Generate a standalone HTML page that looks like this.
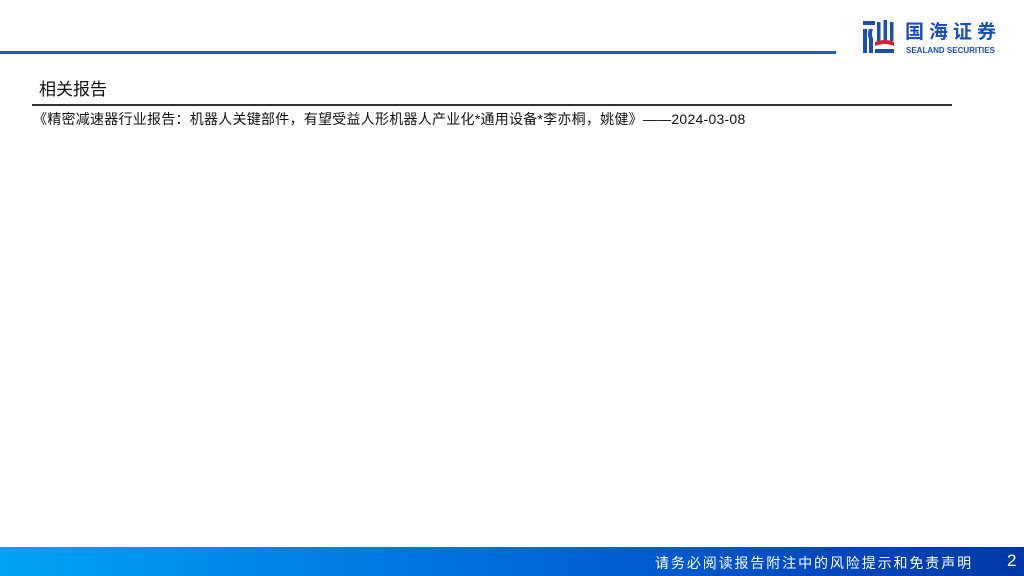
<!DOCTYPE html>
<html><head><meta charset="utf-8"><style>
*{margin:0;padding:0;box-sizing:border-box}
body{width:1024px;height:576px;position:relative;background:#fff;overflow:hidden;font-family:"Liberation Sans","Noto Sans CJK SC",sans-serif;color:#111}
.bl{position:absolute;left:0;top:51px;width:836px;height:3px;background:#1a5fc4}
.t{position:absolute;left:39px;top:75px;font-size:17px}
.hl{position:absolute;left:32px;top:104px;width:920px;height:1.5px;background:#333}
.r{position:absolute;left:33px;top:109px;font-size:14px;white-space:nowrap;letter-spacing:0.25px}
.ft{position:absolute;left:0;top:547px;width:1024px;height:29px;background:linear-gradient(90deg,#00a3f5 0%,#0070e0 45%,#0048c0 80%,#0038a8 100%)}
.ft span{position:absolute;color:#fff}
.logo{position:absolute;left:863px;top:20px}
.lt{position:absolute;left:905px;top:22px;font-size:19px;line-height:22px;font-weight:bold;color:#1a4fb8;letter-spacing:5px;white-space:nowrap}
.ls{position:absolute;left:906px;top:46px;font-size:8px;line-height:9px;font-weight:bold;color:#1a4fb8;white-space:nowrap}
</style></head><body>
<div class="bl"></div>
<svg class="logo" width="32" height="34" viewBox="0 0 32 34">
<path d="M0 1 L12 1 L12 5 L0 5Z" fill="#1a4fb8"/>
<path d="M0 9 L4 9 L4 33 L0 33Z" fill="#1a4fb8"/>
<path d="M6 9 L10 9 Q8 14 10 19 L10 33 L6 33 L6 19 Q4 14 6 9Z" fill="#1a4fb8"/>
<rect x="14" y="2" width="3.5" height="19" fill="#1a4fb8"/>
<rect x="20.5" y="0" width="3.5" height="21" fill="#1a4fb8"/>
<rect x="27" y="2" width="3.5" height="19" fill="#1a4fb8"/>
<path d="M12 22 Q22 18 31 22 L31 26 Q22 22 12 26Z" fill="#d8202a"/>
<rect x="12" y="29" width="19" height="4" fill="#1a4fb8"/>
</svg>
<div class="lt">国海证券</div>
<div class="ls">SEALAND SECURITIES</div>
<div class="t">相关报告</div>
<div class="hl"></div>
<div class="r">《精密减速器行业报告：机器人关键部件，有望受益人形机器人产业化*通用设备*李亦桐，姚健》——2024-03-08</div>
<div class="ft"><span style="left:655px;top:6px;font-size:14px;letter-spacing:1.9px">请务必阅读报告附注中的风险提示和免责声明</span><span style="left:1007px;top:4px;font-size:17px">2</span></div>
</body></html>
